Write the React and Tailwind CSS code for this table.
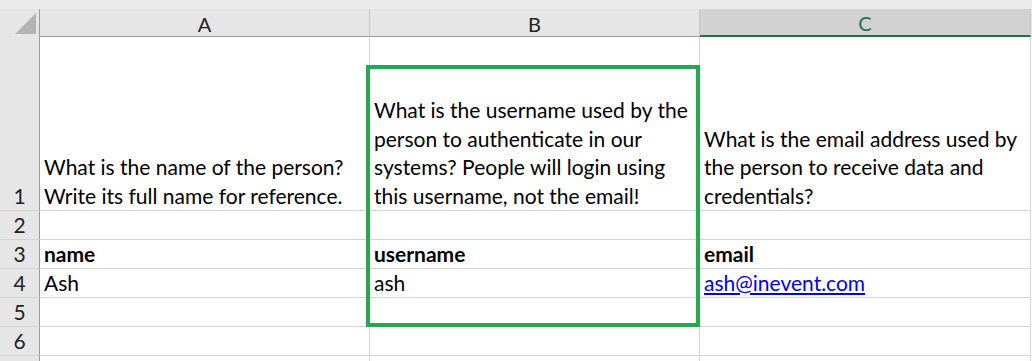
import React from "react";

const cols = ["A", "B", "C"];

const rows = [
  {
    n: 1,
    h: "h-[174px]",
    cells: [
      ["What is the name of the person?", "Write its full name for reference."],
      [
        "What is the username used by the",
        "person to authenticate in our",
        "systems? People will login using",
        "this username, not the email!",
      ],
      [
        "What is the email address used by",
        "the person to receive data and",
        "credentials?",
      ],
    ],
  },
  { n: 2, h: "h-[29px]", cells: [[], [], []] },
  { n: 3, h: "h-[29px]", bold: true, cells: [["name"], ["username"], ["email"]] },
  { n: 4, h: "h-[29px]", cells: [["Ash"], ["ash"], ["ash@inevent.com"]], link: 2 },
  { n: 5, h: "h-[29px]", cells: [[], [], []] },
  { n: 6, h: "h-[29px]", cells: [[], [], []] },
  { n: "", h: "h-[29px]", cells: [[], [], []] },
];

const widths = ["w-[330px]", "w-[330px]", "w-[331px]"];

function HeaderRow() {
  return (
    <div className="flex h-[28px] bg-[#e6e6e6] text-[20px]">
      <div className="relative w-[40px] border-r border-[#9c9c9c]">
        <div
          className="absolute left-[15px] top-[4px] w-[21px] h-[21px] bg-[#b4b4b4]"
          style={{ clipPath: "polygon(100% 0, 100% 100%, 0 100%)" }}
        />
      </div>
      {cols.map((c, i) => {
        const active = c === "C";
        return (
          <div
            key={c}
            className={`${widths[i]} flex items-center justify-center border-r border-[#c8c8c8] ${
              active
                ? "bg-[#d2d2d2] text-[#217346] border-b-2 border-b-[#217346]"
                : "text-[#222] border-b border-b-[#9c9c9c]"
            }`}
          >
            <span className="pt-[2px]">{c}</span>
          </div>
        );
      })}
    </div>
  );
}

export default function App() {
  return (
    <div
      className="relative w-[1032px] h-[361px] overflow-hidden bg-white text-[21px] text-black"
      style={{ fontFamily: "Lato, 'Open Sans', sans-serif" }}
    >
      <div className="h-[9px] bg-[#ebebeb]" />
      <HeaderRow />
      {rows.map((r, idx) => (
        <div key={idx} className={`flex ${r.h}`}>
          <div className="w-[40px] bg-[#e6e6e6] border-r border-[#9c9c9c] border-b border-b-[#d4d4d4] flex items-end justify-center text-[#222] leading-[29px]">
            {r.n}
          </div>
          {r.cells.map((lines, i) => (
            <div
              key={i}
              className={`${widths[i]} border-r border-b border-[#d4d4d4] flex flex-col justify-end pl-[4px] leading-[28.5px] ${
                r.bold ? "font-bold" : ""
              }`}
            >
              {lines.map((t) =>
                r.link === i ? (
                  <a key={t} href="#" className="text-[#0000ee] underline underline-offset-2">
                    {t}
                  </a>
                ) : (
                  <div key={t}>{t}</div>
                )
              )}
            </div>
          ))}
        </div>
      ))}
      {/* highlight around the username column */}
      <div className="absolute left-[366px] top-[65px] w-[334px] h-[262px] border-4 border-[#27a84f] pointer-events-none" />
    </div>
  );
}
